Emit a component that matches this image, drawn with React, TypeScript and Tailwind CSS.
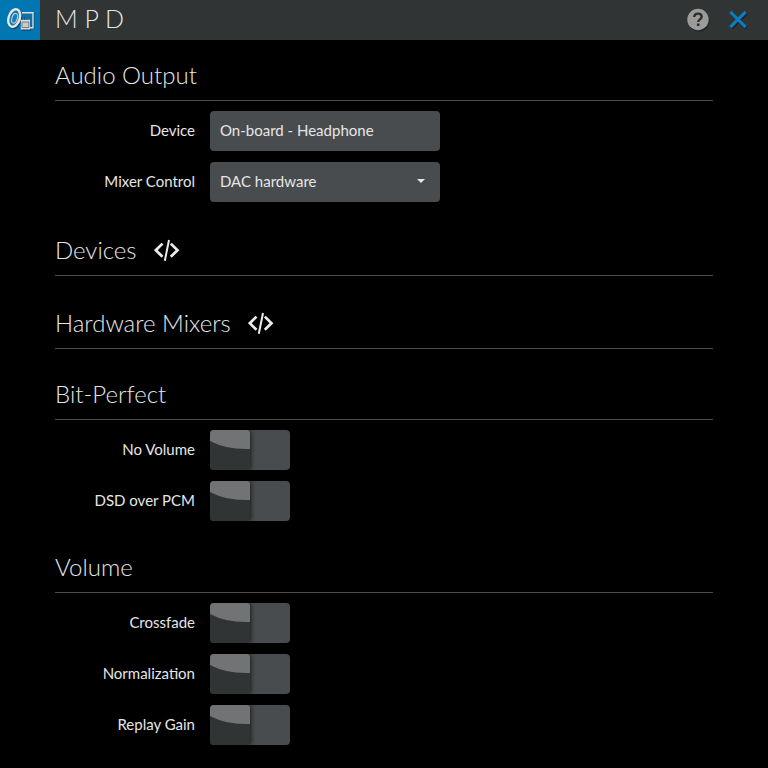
import { useId, useState } from "react";
import type { ReactNode } from "react";

function CodeIcon() {
  return (
    <svg viewBox="0 0 26 22" className="h-[22px] w-[26px]" fill="none" stroke="#ececec" aria-hidden="true">
      <path d="M8.500 4.600 1.800 11.200l6.700 6.600M16.800 4.600 23.500 11.200l-6.700 6.600" strokeWidth="2.700" />
      <path d="M15 1 10.800 21.800" strokeWidth="2" />
    </svg>
  );
}

function SpeakerLogo() {
  return (
    <svg viewBox="0 0 40 40" className="h-10 w-10" aria-hidden="true">
      <g transform="translate(1 1)" fill="#0f4468" opacity="0.8">
        <ellipse cx="14" cy="18.500" rx="7" ry="10" transform="rotate(18 14 18.500)" />
        <path d="M23 12h10.500v16H30v2h-9V19h2z" />
      </g>
      <path d="M22 12.700h11v15h-3" fill="#146da4" stroke="#dededb" strokeWidth="1.400" />
      <ellipse cx="14.200" cy="18" rx="5.600" ry="9" transform="rotate(18 14.200 18)" fill="#1474ae" stroke="#e8e6e1" strokeWidth="2.400" />
      <ellipse cx="14.600" cy="18.300" rx="2.700" ry="5" transform="rotate(18 14.600 18.300)" fill="#1580bd" stroke="#b9cbd5" strokeWidth="1.200" />
      <path d="M20.800 19.800h9.200v9.700h-9.200z" fill="#dcdad5" />
      <path d="M22 22h6.800v5.500H22z" fill="#cfcdc9" stroke="#69747b" strokeWidth="0.9" />
    </svg>
  );
}

function HelpIcon() {
  return (
    <svg viewBox="0 0 24 24" className="h-6 w-6" fill="none" aria-hidden="true">
      <circle cx="13" cy="13" r="10.500" fill="#181b1b" opacity="0.7" />
      <circle cx="12" cy="11.500" r="10.700" fill="#9b9b99" />
      <path d="M8.200 9C8.400 6.800 10 5.600 12 5.600c2.200 0 3.700 1.200 3.700 3.100 0 2.600-3.500 2.600-3.500 5.300" stroke="#292d2d" strokeWidth="2.300" />
      <path d="M10.900 15.500h2.600v2.500h-2.600z" fill="#292d2d" />
    </svg>
  );
}

function CloseIcon() {
  return (
    <svg viewBox="0 0 24 24" className="h-6 w-6" fill="none" aria-hidden="true">
      <path d="m5.500 5 15 15m0-15-15 15" stroke="#171a1a" strokeWidth="3.200" opacity="0.8" />
      <path d="m4.300 3.800 15.400 15.400m0-15.400L4.300 19.200" stroke="#0a7cc0" strokeWidth="3.200" />
    </svg>
  );
}

function Section({ title, code = false, children }: { title: string; code?: boolean; children?: ReactNode }) {
  return (
    <section>
      <div className={`mb-[10px] flex items-center gap-[17px] border-b border-[#4a4d4f] pb-[10px] ${code ? "pt-[22px]" : "pt-5"}`}>
        <h2 className="text-[24px] leading-[30px] font-light">{title}</h2>
        {code && (
          <button type="button" aria-label={`Show ${title} code`}>
            <CodeIcon />
          </button>
        )}
      </div>
      {children}
    </section>
  );
}

function Row({ id, label, children }: { id: string; label: string; children: ReactNode }) {
  return (
    <div className="mb-[11px] flex h-10 items-center gap-[15px]">
      <label htmlFor={id} className="w-[140px] shrink-0 pb-[2px] text-right">
        {label}
      </label>
      {children}
    </div>
  );
}

function Toggle({ label }: { label: string }) {
  const id = useId();
  const [on, setOn] = useState(false);
  return (
    <Row id={id} label={label}>
      <label className="block h-10 w-20 cursor-pointer overflow-hidden rounded-[4px] bg-[#484c4e] has-checked:bg-[#0077b3]">
        <input id={id} type="checkbox" checked={on} onChange={(e) => setOn(e.target.checked)} className="peer sr-only" />
        <span className="block h-10 w-10 rounded-r-[3px] bg-[#303434] shadow-[1px_0_4px_#191c1c] transition-transform peer-checked:translate-x-10">
          <svg viewBox="0 0 40 40" className="h-10 w-10" aria-hidden="true">
            <path d="M0 0h37q3 0 3 3v16Q17 20 0 11z" fill="#727375" />
          </svg>
        </span>
      </label>
    </Row>
  );
}

export default function App() {
  return (
    <div className="min-h-screen bg-black font-['Lato','Liberation_Sans',sans-serif] text-[15px] leading-5 text-[#e6e6e6]">
      <header className="flex h-10 items-center bg-[#303434]">
        <div className="h-10 w-10 bg-[#0077b3]">
          <SpeakerLogo />
        </div>
        <h1 className="ml-[15px] flex-1 pb-1 text-[25px] leading-[30px] font-light">M P D</h1>
        <div className="flex gap-4 pr-[18px]">
          <button type="button" aria-label="Help">
            <HelpIcon />
          </button>
          <button type="button" aria-label="Close">
            <CloseIcon />
          </button>
        </div>
      </header>
      <main className="px-[55px]">
        <Section title="Audio Output">
          <Row id="device" label="Device">
            <input id="device" type="text" readOnly value="On-board - Headphone" className="h-10 w-[230px] rounded-[4px] bg-[#484c4e] px-[10px] pb-[2px] outline-none" />
          </Row>
          <Row id="mixer" label="Mixer Control">
            <div className="relative w-[230px]">
              <select id="mixer" className="h-10 w-full appearance-none rounded-[4px] bg-[#484c4e] px-[10px] pb-[2px] outline-none">
                <option>DAC hardware</option>
              </select>
              <svg viewBox="0 0 8 4" className="pointer-events-none absolute top-[17px] right-[15px] h-1 w-2" fill="#e6e6e6" aria-hidden="true">
                <path d="M0 0h8L4 4z" />
              </svg>
            </div>
          </Row>
        </Section>
        <Section title="Devices" code />
        <Section title="Hardware Mixers" code />
        <Section title="Bit-Perfect">
          <Toggle label="No Volume" />
          <Toggle label="DSD over PCM" />
        </Section>
        <Section title="Volume">
          <Toggle label="Crossfade" />
          <Toggle label="Normalization" />
          <Toggle label="Replay Gain" />
        </Section>
      </main>
    </div>
  );
}
